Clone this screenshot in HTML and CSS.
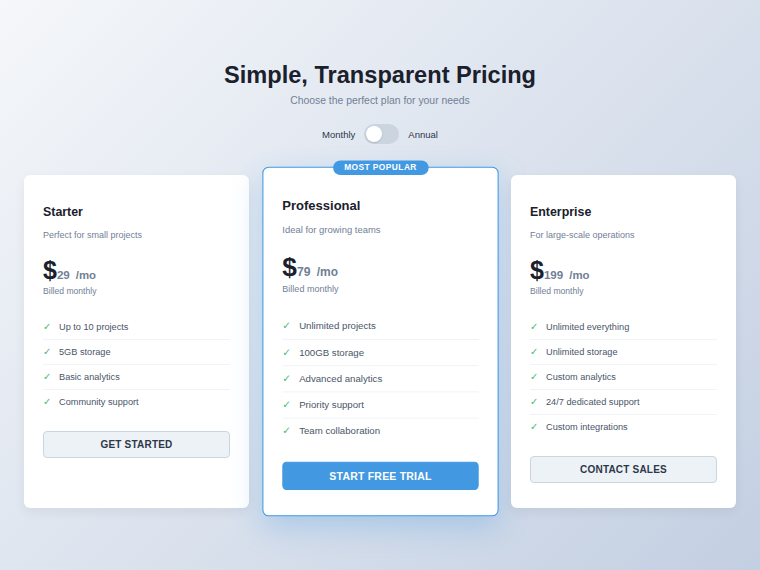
FILE: index.html
```html
<!DOCTYPE html>

<html>
    <head>
        <meta charset="UTF-8">
        <title>Pricing</title>

        <link rel="stylesheet" href="styles.css">
    </head>

    <body>
        <div class="container">
            <div class="header">
                <h1>Simple, Transparent Pricing</h1>
                <p class="subtitle">Choose the perfect plan for your needs</p>

                <div class="billing-toggle">
                    <span>Monthly</span>
                    <span class="switch"><span class="knob"></span></span>
                    <span>Annual</span>
                </div>
            </div>

            <div class="plans">
                <div class="card">
                    <h2>Starter</h2>
                    <p class="desc">Perfect for small projects</p>
                    <div class="price">
                        <span class="currency">$</span>
                        <span class="amount">29</span>
                        <span class="period">/mo</span>
                    </div>
                    <p class="billed">Billed monthly</p>
                    <ul class="features">
                        <li><span class="check">✓</span>Up to 10 projects</li>
                        <li><span class="check">✓</span>5GB storage</li>
                        <li><span class="check">✓</span>Basic analytics</li>
                        <li><span class="check">✓</span>Community support</li>
                    </ul>
                    <button class="btn">GET STARTED</button>
                </div>

                <div class="card popular">
                    <span class="badge">MOST POPULAR</span>
                    <h2>Professional</h2>
                    <p class="desc">Ideal for growing teams</p>
                    <div class="price">
                        <span class="currency">$</span>
                        <span class="amount">79</span>
                        <span class="period">/mo</span>
                    </div>
                    <p class="billed">Billed monthly</p>
                    <ul class="features">
                        <li><span class="check">✓</span>Unlimited projects</li>
                        <li><span class="check">✓</span>100GB storage</li>
                        <li><span class="check">✓</span>Advanced analytics</li>
                        <li><span class="check">✓</span>Priority support</li>
                        <li><span class="check">✓</span>Team collaboration</li>
                    </ul>
                    <button class="btn btn-primary">START FREE TRIAL</button>
                </div>

                <div class="card">
                    <h2>Enterprise</h2>
                    <p class="desc">For large-scale operations</p>
                    <div class="price">
                        <span class="currency">$</span>
                        <span class="amount">199</span>
                        <span class="period">/mo</span>
                    </div>
                    <p class="billed">Billed monthly</p>
                    <ul class="features">
                        <li><span class="check">✓</span>Unlimited everything</li>
                        <li><span class="check">✓</span>Unlimited storage</li>
                        <li><span class="check">✓</span>Custom analytics</li>
                        <li><span class="check">✓</span>24/7 dedicated support</li>
                        <li><span class="check">✓</span>Custom integrations</li>
                    </ul>
                    <button class="btn">CONTACT SALES</button>
                </div>
            </div>
        </div>
    </body>
</html>
```

FILE: styles.css
```css
* {
    margin: 0;
    padding: 0;
    box-sizing: border-box;
}

html, body {
    width: 100%;
    height: 100%;
}

body {
    font-family: "Liberation Sans", Arial, sans-serif;
    background: linear-gradient(135deg, #f5f7fa 0%, #c3cfe2 100%);
    color: #1a202c;
}

.container {
    padding: 61px 24px 0 24px;
}

.header {
    text-align: center;
}

h1 {
    font-size: 23.6px;
    line-height: 28px;
    font-weight: 700;
    color: #1a202c;
}

.subtitle {
    margin-top: 5px;
    font-size: 10.4px;
    line-height: 14px;
    color: #718096;
}

.billing-toggle {
    margin-top: 16px;
    display: flex;
    justify-content: center;
    align-items: center;
    gap: 9px;
    font-size: 9.5px;
    color: #2d3748;
}

.switch {
    width: 35px;
    height: 20px;
    border-radius: 10px;
    background-color: #cbd5e0;
    display: flex;
    align-items: center;
    padding: 0 2px;
}

.knob {
    width: 16px;
    height: 16px;
    border-radius: 50%;
    background-color: #fff;
    box-shadow: 0 1px 2px rgba(0, 0, 0, 0.15);
}

.plans {
    margin-top: 31px;
    display: grid;
    grid-template-columns: repeat(3, 1fr);
    gap: 18.5px;
}

.card {
    position: relative;
    background-color: #fff;
    border-radius: 6px;
    padding: 30px 19px 25px 19px;
    box-shadow: 0 4px 12px rgba(0, 0, 0, 0.06);
}

.card.popular {
    border: 1px solid #4299e1;
    padding: 29px 18px 24px 18px;
    transform: scale(1.05);
    box-shadow: 0 10px 28px rgba(66, 153, 225, 0.3);
}

.badge {
    position: absolute;
    top: -7.5px;
    left: 50%;
    transform: translateX(-50%);
    height: 14px;
    line-height: 14px;
    padding: 0 11px;
    border-radius: 7px;
    background-color: #4299e1;
    color: #fff;
    font-size: 8px;
    font-weight: 700;
    letter-spacing: 0.4px;
    white-space: nowrap;
}

h2 {
    font-size: 12.4px;
    line-height: 14px;
    font-weight: 700;
    color: #1a202c;
}

.desc {
    margin-top: 10px;
    font-size: 9px;
    line-height: 12px;
    color: #718096;
}

.price {
    margin-top: 15px;
    display: flex;
    align-items: baseline;
    height: 28px;
}

.currency {
    font-size: 25px;
    font-weight: 700;
    color: #1a202c;
}

.amount {
    font-size: 11.6px;
    font-weight: 700;
    color: #718096;
}

.period {
    margin-left: 6px;
    font-size: 11.4px;
    font-weight: 700;
    color: #718096;
}

.billed {
    margin-top: 1px;
    font-size: 8.6px;
    line-height: 12px;
    color: #718096;
}

.features {
    margin-top: 18px;
    list-style: none;
}

.features li {
    display: flex;
    align-items: center;
    padding: 6px 0;
    line-height: 12px;
    font-size: 9.2px;
    color: #4a5568;
    border-bottom: 1px solid #f1f3f6;
}

.features li:last-child {
    border-bottom: none;
}

.check {
    width: 16px;
    color: #48bb78;
    font-family: "DejaVu Sans", sans-serif;
    font-size: 10px;
}

.btn {
    margin-top: 17px;
    display: block;
    width: 100%;
    height: 27px;
    border: 1px solid #cbd5e0;
    border-radius: 4px;
    background-color: #edf2f7;
    color: #2d3748;
    font-family: "Liberation Sans", Arial, sans-serif;
    font-size: 10px;
    font-weight: 700;
    letter-spacing: 0.2px;
}

.btn-primary {
    background-color: #4299e1;
    border-color: #4299e1;
    color: #fff;
}
```
